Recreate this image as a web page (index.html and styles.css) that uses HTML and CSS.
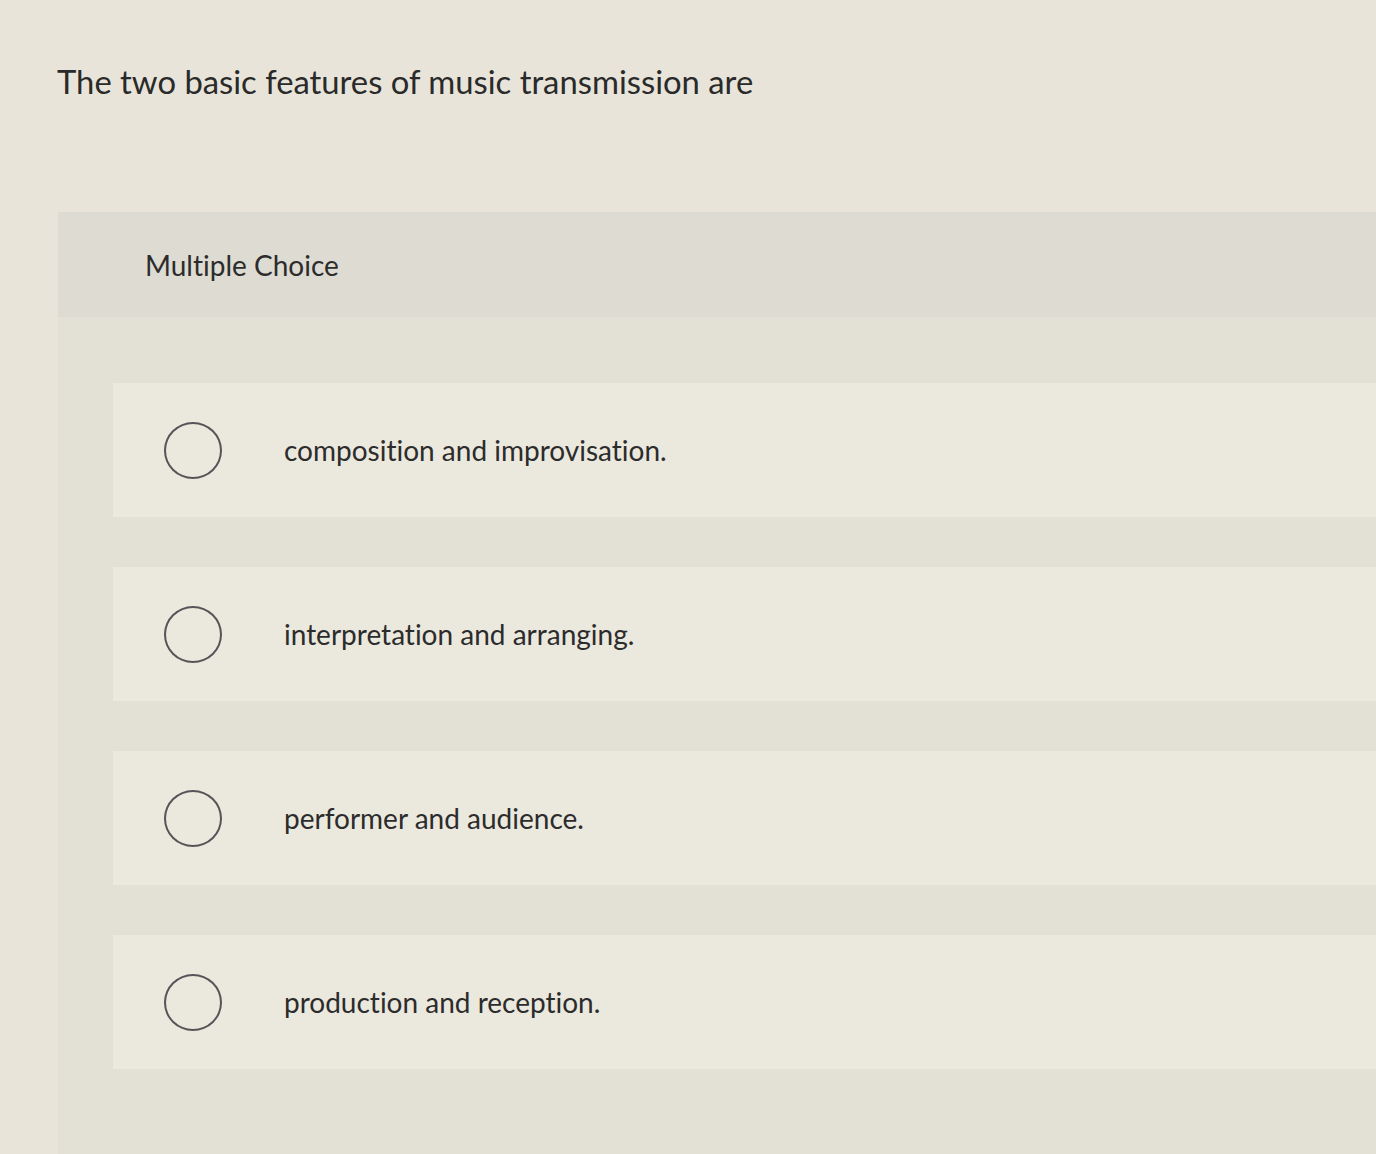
FILE: index.html
```html
<!DOCTYPE html>
<html>
<head>
<meta charset="utf-8">
<link rel="stylesheet" href="styles.css">
</head>
<body>
<div class="question">The two basic features of music transmission are</div>
<div class="panel">
  <div class="panel-header">Multiple Choice</div>
  <div class="options">
    <div class="option"><span class="radio"></span><span class="label">composition and improvisation.</span></div>
    <div class="option"><span class="radio"></span><span class="label">interpretation and arranging.</span></div>
    <div class="option"><span class="radio"></span><span class="label">performer and audience.</span></div>
    <div class="option"><span class="radio"></span><span class="label">production and reception.</span></div>
  </div>
</div>
</body>
</html>
```
FILE: styles.css
```css
html, body {
  margin: 0;
  padding: 0;
}
body {
  background: #e8e4d9;
  font-family: Lato, "Open Sans", sans-serif;
  font-variant-ligatures: none;
  color: #2c2c2c;
  height: 1154px;
  overflow: hidden;
}
.question {
  font-size: 32.8px;
  height: 212px;
  padding: 62px 0 0 57px;
  box-sizing: border-box;
  color: #2a2a2a;
}
.panel {
  margin-left: 58px;
  background: #e3e0d6;
  min-height: 942px;
}
.panel-header {
  height: 105px;
  background: #dedbd2;
  display: flex;
  align-items: center;
  padding-left: 87px;
  font-size: 28px;
  color: #2c2c2c;
  box-sizing: border-box;
}
.options {
  padding: 66px 0 0 55px;
  display: flex;
  flex-direction: column;
  gap: 50px;
}
.option {
  height: 134px;
  background: #ebe8de;
  display: flex;
  align-items: center;
  padding-left: 51px;
}
.radio {
  width: 54px;
  height: 53px;
  border: 2px solid #555558;
  border-radius: 50%;
  flex: none;
}
.label {
  margin-left: 62px;
  font-size: 28px;
  color: #2c2c2c;
}
```
